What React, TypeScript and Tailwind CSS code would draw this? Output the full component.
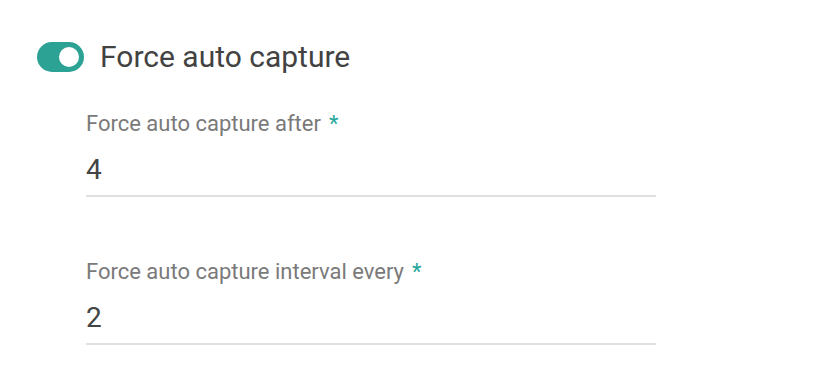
import React from "react";

function Field({ label, value }: { label: string; value: string }) {
  return (
    <div className="w-[570px]">
      <div className="text-[22px] leading-[26px] text-[#7a7a7a]">
        {label}
        <span className="ml-[8px] text-[#26a69a]">*</span>
      </div>
      <div className="mt-[17px] text-[28px] leading-[32px] text-[#444444] pb-[9px] border-b-2 border-[#e0e0e0]">
        {value}
      </div>
    </div>
  );
}

export default function App() {
  return (
    <div
      className="w-[817px] h-[386px] bg-white"
      style={{ fontFamily: "Roboto, 'Noto Sans', sans-serif" }}
    >
      <div className="pt-[42px] pl-[37px] flex items-center gap-[16px]">
        <div className="w-[47px] h-[30px] rounded-full bg-[#2ba293] relative shrink-0">
          <div className="absolute right-[5px] top-[5px] w-[20px] h-[20px] rounded-full bg-white" />
        </div>
        <div className="text-[30px] leading-[30px] text-[#424242]">Force auto capture</div>
      </div>
      <div className="pl-[86px] pt-[39px] flex flex-col gap-[62px]">
        <Field label="Force auto capture after" value="4" />
        <Field label="Force auto capture interval every" value="2" />
      </div>
    </div>
  );
}
